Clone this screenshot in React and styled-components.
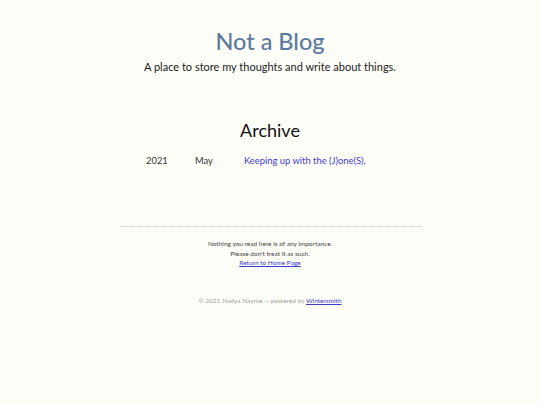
import React from "react";
import styled, { createGlobalStyle } from "styled-components";

const Global = createGlobalStyle`
  html, body { margin: 0; padding: 0; background: #fefef8; }
  body { font-family: Lato, "Noto Sans", sans-serif; color: #222; }
`;

const Page = styled.div`
  width: 540px;
  display: flex;
  flex-direction: column;
  align-items: center;
`;

const Header = styled.header`
  display: flex;
  flex-direction: column;
  align-items: center;
  padding-top: 25px;
`;

const Title = styled.h1`
  margin: 0;
  font-size: 23.5px;
  line-height: 32px;
  font-weight: 500;
  color: #5a7a9f;
`;

const Tagline = styled.p`
  margin: 2px 0 0;
  font-size: 11px;
  line-height: 16px;
  color: #222;
`;

const Main = styled.main`
  width: 300px;
  display: flex;
  flex-direction: column;
  align-items: center;
  padding-top: 43px;
`;

const Heading = styled.h2`
  margin: 0;
  font-size: 18px;
  line-height: 24px;
  font-weight: 400;
  color: #111;
`;

const Row = styled.div`
  align-self: stretch;
  display: grid;
  grid-template-columns: 49px 49px 1fr;
  margin-top: 12px;
  padding-left: 26px;
  font-size: 9.4px;
  line-height: 14px;
  color: #333;
`;

const PostLink = styled.a`
  color: #3c3cd0;
  text-decoration: none;
`;

const Footer = styled.footer`
  width: 300px;
  margin-top: 58px;
  border-top: 1px dotted #c8c8c8;
  display: flex;
  flex-direction: column;
  align-items: center;
  padding-top: 12px;
  font-size: 6.5px;
  line-height: 9.6px;
  font-weight: 400;
  color: #444;
`;

const Line = styled.div``;

const SmallLink = styled.a`
  color: #3c3cd0;
  text-decoration: underline;
`;

const Copyright = styled.div`
  margin-top: 28px;
  font-size: 6.5px;
  line-height: 9px;
  font-weight: 400;
  color: #a0a0a0;
`;

export default function App() {
  return (
    <>
      <Global />
      <Page>
        <Header>
          <Title>Not a Blog</Title>
          <Tagline>A place to store my thoughts and write about things.</Tagline>
        </Header>
        <Main>
          <Heading>Archive</Heading>
          <Row>
            <span>2021</span>
            <span>May</span>
            <PostLink href="#">Keeping up with the (J)one(S).</PostLink>
          </Row>
        </Main>
        <Footer>
          <Line>Nothing you read here is of any importance.</Line>
          <Line>Please don't treat it as such.</Line>
          <SmallLink href="#">Return to Home Page</SmallLink>
        </Footer>
        <Copyright>
          © 2021 Nadya Nayme — powered by <SmallLink href="#">Wintersmith</SmallLink>
        </Copyright>
      </Page>
    </>
  );
}
